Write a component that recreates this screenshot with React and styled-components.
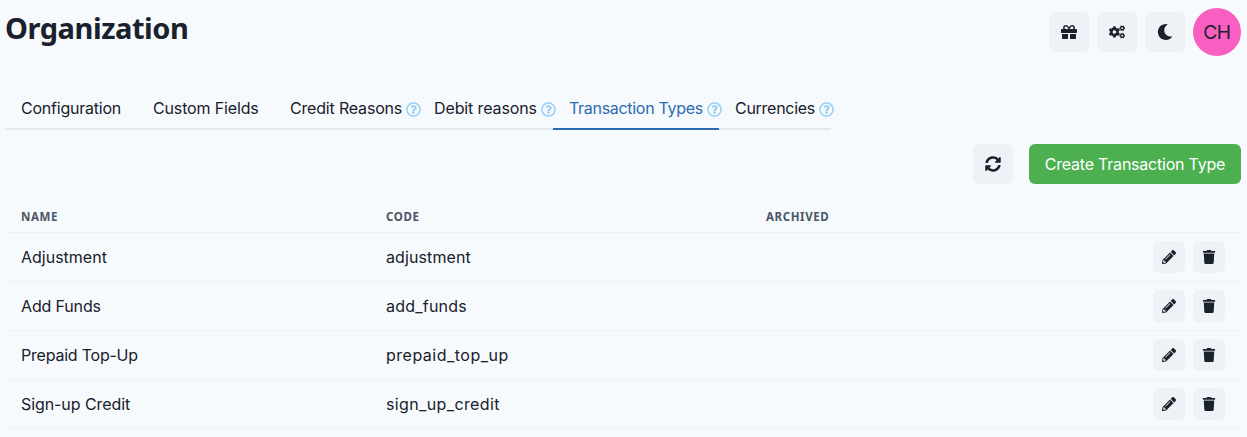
import React from 'react';
import styled, { createGlobalStyle } from 'styled-components';
import { FaGift, FaCogs, FaMoon, FaTrash, FaPencilAlt, FaSyncAlt, FaRegQuestionCircle } from 'react-icons/fa';

const GlobalStyle = createGlobalStyle`
    * {
        box-sizing: border-box;
    }

    body {
        margin: 0;
        background-color: #f6fafd;
        color: #1a202c;
        font-family: 'Inter', 'Open Sans', sans-serif;
        font-size: 16px;
        line-height: 24px;
        overflow: hidden;
    }
`;

const Page = styled.main`
    height: 437px;
    padding: 8px 6px 0 5px;
    overflow: hidden;
`;

const Header = styled.header`
    display: flex;
    justify-content: space-between;
    align-items: flex-start;
    height: 80px;
`;

const Title = styled.h1`
    margin: 0;
    font-family: 'Noto Sans', sans-serif;
    font-size: 29px;
    font-weight: 700;
    line-height: 40px;
    letter-spacing: -0.45px;
`;

const Actions = styled.div`
    display: flex;
    align-items: center;
    gap: 8px;
`;

const IconButton = styled.button`
    display: flex;
    align-items: center;
    justify-content: center;
    width: ${({ $size }) => $size || 40}px;
    height: ${({ $size }) => $size || 40}px;
    padding: 0;
    border: none;
    border-radius: 6px;
    background-color: #edf2f6;
    color: #1a202c;
    font-size: ${({ $icon }) => $icon || 16}px;

    &:hover {
        cursor: pointer;
    }
`;

const Avatar = styled.div`
    display: flex;
    align-items: center;
    justify-content: center;
    width: 48px;
    height: 48px;
    border-radius: 50%;
    background-color: #f95fc0;
    font-size: 19.2px;
    letter-spacing: -0.3px;
`;

const TabList = styled.nav`
    display: flex;
    width: max-content;
`;

const Tab = styled.a`
    display: flex;
    align-items: center;
    width: ${({ $width }) => $width}px;
    height: 42px;
    padding: 0 16px;
    border-bottom: 2px solid ${({ $active }) => ($active ? '#2b6cb0' : '#e2e8f0')};
    color: ${({ $active }) => ($active ? '#2b6cb0' : 'inherit')};
    letter-spacing: ${({ $spacing }) => $spacing}px;
    white-space: nowrap;

    & > svg {
        flex: none;
        margin: 2px -19px 0 4px;
        color: #90cdf4;
        font-size: 15px;
    }
`;

const Toolbar = styled.div`
    display: flex;
    justify-content: flex-end;
    gap: 16px;
    padding: 14px 0 16px;
`;

const CreateButton = styled.button`
    width: 212px;
    height: 40px;
    padding: 0;
    border: none;
    border-radius: 6px;
    background-color: #4caf50;
    color: #fff;
    font: inherit;
    letter-spacing: -0.22px;
    white-space: nowrap;
`;

const Row = styled.div`
    display: grid;
    grid-template-columns: 365px 380px 1fr auto;
    align-items: center;
    height: ${({ $head }) => ($head ? 33 : 49)}px;
    padding: 0 16px;
    border-bottom: 1px solid #edf2f6;
`;

const HeadCell = styled.span`
    padding-top: 2px;
    color: #4a5568;
    font-family: 'Noto Sans', sans-serif;
    font-size: 11.5px;
    font-weight: 700;
    line-height: 16px;
    letter-spacing: 0.6px;
    text-transform: uppercase;
`;

const Cell = styled.span`
    letter-spacing: ${({ $spacing }) => $spacing}px;
    white-space: nowrap;
`;

const tabs = [
    { label: 'Configuration', width: 132, spacing: -0.23 },
    { label: 'Custom Fields', width: 137, spacing: -0.15 },
    { label: 'Credit Reasons', width: 144, spacing: -0.18, help: true },
    { label: 'Debit reasons', width: 135, spacing: -0.12, help: true },
    { label: 'Transaction Types', width: 166, spacing: -0.3, help: true, active: true },
    { label: 'Currencies', width: 112, spacing: -0.27, help: true },
];

const types = [
    { name: 'Adjustment', spacing: 0, code: 'adjustment', codeSpacing: 0.1 },
    { name: 'Add Funds', spacing: -0.15, code: 'add_funds', codeSpacing: 0.22 },
    { name: 'Prepaid Top-Up', spacing: -0.22, code: 'prepaid_top_up', codeSpacing: 0.5 },
    { name: 'Sign-up Credit', spacing: -0.08, code: 'sign_up_credit', codeSpacing: 0.37 },
];

const App = () => (
    <>
        <GlobalStyle />
        <Page>
            <Header>
                <Title>Organization</Title>
                <Actions>
                    <IconButton><FaGift /></IconButton>
                    <IconButton><FaCogs /></IconButton>
                    <IconButton><FaMoon /></IconButton>
                    <Avatar>CH</Avatar>
                </Actions>
            </Header>
            <TabList>
                {tabs.map(tab => (
                    <Tab key={tab.label} $width={tab.width} $spacing={tab.spacing} $active={tab.active}>
                        {tab.label}
                        {tab.help ? <FaRegQuestionCircle /> : null}
                    </Tab>
                ))}
            </TabList>
            <Toolbar>
                <IconButton><FaSyncAlt /></IconButton>
                <CreateButton>Create Transaction Type</CreateButton>
            </Toolbar>
            <Row $head>
                <HeadCell>Name</HeadCell>
                <HeadCell>Code</HeadCell>
                <HeadCell>Archived</HeadCell>
            </Row>
            {types.map(type => (
                <Row key={type.code}>
                    <Cell $spacing={type.spacing}>{type.name}</Cell>
                    <Cell $spacing={type.codeSpacing}>{type.code}</Cell>
                    <span />
                    <Actions>
                        <IconButton $size={32} $icon={14}><FaPencilAlt /></IconButton>
                        <IconButton $size={32} $icon={14}><FaTrash /></IconButton>
                    </Actions>
                </Row>
            ))}
        </Page>
    </>
);

export default App;
